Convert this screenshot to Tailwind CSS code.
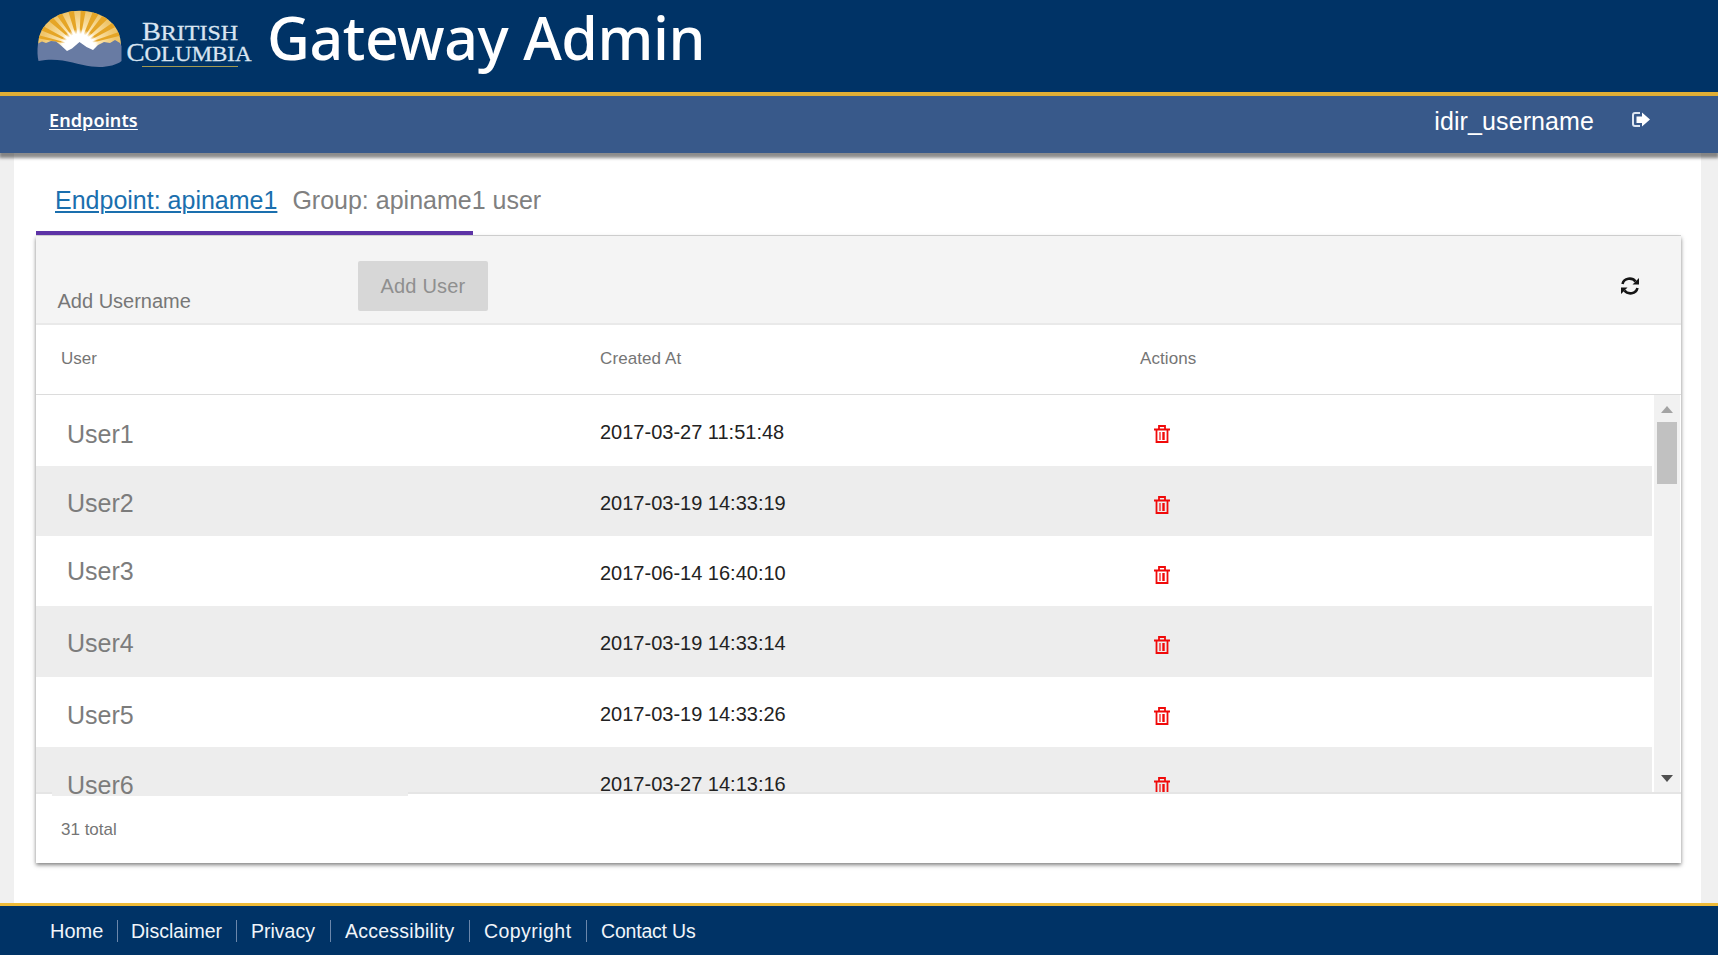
<!DOCTYPE html>
<html lang="en">
<head>
<meta charset="utf-8">
<title>Gateway Admin</title>
<script src="https://cdn.jsdelivr.net/npm/@tailwindcss/browser@4"></script>
</head>
<body class="w-[1718px] h-[955px] overflow-hidden flex flex-col bg-[#f0f0f0] font-['Liberation_Sans',Arial,sans-serif] text-[#757575]">
<svg class="hidden">
  <symbol id="trash" viewBox="0 0 16 18"><path fill="none" stroke="currentColor" stroke-width="1.800" d="M0 4.500h16M5 4V1h6v3M2.500 4.500v12.500h11V4.500"/><path fill="none" stroke="currentColor" stroke-width="1.200" d="M6 7v8"/><path fill="none" stroke="currentColor" stroke-width="2.400" d="M9.500 7v8"/></symbol>
</svg>
<header class="h-[96px] shrink-0 bg-[#003366] border-b-4 border-[#e0ae35] flex pl-[37px]">
  <svg class="w-[216px] h-[60px] mt-[10px] shrink-0" viewBox="37 10 216 60">
    <defs>
      <clipPath id="dome"><path d="M38 46C38 -1 121 -1 121 46V56H38Z"/></clipPath>
      <radialGradient id="glow" gradientUnits="userSpaceOnUse" cx="79" cy="48" r="38"><stop offset=".4" stop-color="#fff"/><stop offset=".55" stop-color="#fbe3ac"/><stop offset="1" stop-color="#efc56a"/></radialGradient>
      <radialGradient id="core" gradientUnits="userSpaceOnUse" cx="79" cy="49" r="20"><stop offset=".75" stop-color="#fff"/><stop offset="1" stop-color="#fff" stop-opacity="0"/></radialGradient>
    </defs>
    <g clip-path="url(#dome)">
      <rect x="37" y="10" width="85" height="46" fill="url(#glow)"/>
      <path fill="#e5a526" d="M79 46L31 37v-4ZM79 46L31 26l3-5ZM79 46L38 12l5-5ZM79 46L50 6l7-2ZM79 46L66 4h7ZM79 46L81 4h6ZM79 46L96 4l7 3ZM79 46L110 6l6 5ZM79 46L122 16l3 6ZM79 46L127 29v5Z"/>
      <circle cx="79" cy="49" r="20" fill="url(#core)"/>
    </g>
    <path fill="#687ba3" d="M38 43.500l4-2 4 1.500 5-2 5 .5 5 4 6 5.500 5-2.500 7.500-6.500 7 5 6.500 3 5-5 6-3 6 1 5-3 5 3 1.500 3v15c-6 5-18 7-30 5.500-16-2-31-10-53-5.500-1-4-1.500-10-.5-17.500Z"/>
    <g font-family="'Liberation Serif',serif" fill="#d9e5f1" stroke="#d9e5f1" stroke-width=".3">
      <text x="142" y="40" font-size="26" textLength="96" lengthAdjust="spacingAndGlyphs">B<tspan font-size="22">RITISH</tspan></text>
      <text x="126.500" y="61" font-size="26" textLength="125" lengthAdjust="spacingAndGlyphs">C<tspan font-size="22">OLUMBIA</tspan></text>
    </g>
    <path stroke="#a49a52" d="M142 66.500h96"/>
  </svg>
  <h1 class="ml-[14px] mt-[-3px] h-[80px] leading-[80px] text-[59px] tracking-[-0.45px] text-white whitespace-nowrap font-medium font-['Noto_Sans',sans-serif]">Gateway Admin</h1>
</header>
<nav class="relative z-10 h-[57px] shrink-0 bg-[#38598a] shadow-[0_4px_3px_1px_rgba(0,0,0,0.45)] flex justify-between pl-[49px] pr-[69px]">
  <a class="mt-[11px] h-[26px] leading-[26px] text-[18px] tracking-[0.1px] text-white underline underline-offset-2 font-semibold font-['Noto_Sans',sans-serif]">Endpoints</a>
  <div class="flex text-white">
    <span class="mt-[11px] h-[28px] leading-[28px] text-[25px] tracking-[0.1px]">idir_username</span>
    <svg class="w-[18px] h-[15px] ml-[37px] mt-[16px] translate-x-px" viewBox="0 0 18 15"><path fill="none" stroke="#dde6f2" stroke-width="2" d="M8 1H3Q1 1 1 3v9q0 2 2 2h5"/><path fill="#fff" d="M4.500 4.500H10V0.500l8 7-8 7V11H4.500Z"/></svg>
  </div>
</nav>
<main class="h-[750px] shrink-0 mx-[14px] mr-[17px] bg-white pl-[22px] pr-[20px]">
  <div class="h-[83px] flex flex-col justify-between border-b border-[#dadada]">
    <div class="flex pt-[33px] pl-[19px] text-[25px] leading-[28px]">
      <a class="text-[#1a6fae] underline decoration-2 underline-offset-2">Endpoint: apiname1</a>
      <span class="ml-[15px] text-[#808080]">Group: apiname1 user</span>
    </div>
    <div class="w-[437px] h-[4px] bg-[#5d33a6]"></div>
  </div>
  <section class="h-[627px] bg-white shadow-[0_2px_4px_0_rgba(0,0,0,0.5)] flex flex-col">
    <div class="h-[89px] shrink-0 bg-[#f4f4f4] border-b-2 border-[#e9e9e9] flex text-[20px] leading-[23px]">
      <span class="w-[300px] ml-[21.5px] mt-[54px] text-[#777]">Add Username</span>
      <button class="w-[130px] h-[50px] mt-[25px] pt-px pl-px rounded-xs bg-[#d7d7d7] text-[#8f8f8f] tracking-[0.2px]">Add User</button>
      <svg class="w-[18px] h-[18px] ml-auto mr-[42px] mt-[41px] text-[#151515]" viewBox="0 0 18 18"><path fill="none" stroke="currentColor" stroke-width="2.600" d="M1.500 7C3 1 11 0 14.500 4.500M16.500 11C15 17 7 18 3.500 13.500"/><path fill="currentColor" d="M18 1v6.500h-6.500ZM0 17v-6.500h6.500Z"/></svg>
    </div>
    <div class="h-[70px] shrink-0 border-b border-[#dcdcdc] grid grid-cols-[539px_539px_1fr] pl-[25px] pt-[24px] text-[17px] leading-[20px]">
      <span>User</span><span class="tracking-[0.1px]">Created At</span><span class="pl-px tracking-[0.1px]">Actions</span>
    </div>
    <div class="h-[399px] shrink-0 flex border-b-2 border-[#e5e5e5]">
      <div class="w-[1616px] h-[397px] shrink-0" id="rows"></div>
      <div class="ml-[2px] w-[26px] bg-[#f1f1f1] flex flex-col items-center">
        <svg class="w-[12px] h-[7px] mt-[11px]" viewBox="0 0 12 7"><path fill="#a3a3a3" d="M0 7L6 0l6 7Z"/></svg>
        <div class="w-[20px] h-[62px] mt-[9px] bg-[#c1c1c1]"></div>
        <svg class="w-[12px] h-[7px] mt-auto mb-[10px]" viewBox="0 0 12 7"><path fill="#505050" d="M0 0h12L6 7Z"/></svg>
      </div>
    </div>
    <div class="pl-[25px] pt-[26px] text-[17px] leading-[20px]">31 total</div>
  </section>
</main>
<footer class="h-[52px] shrink-0 bg-[#003366] border-t-3 border-[#efbb38] flex text-[19.5px] text-[#f0f5fa] leading-[22px] pl-[50px] pt-[14px] whitespace-nowrap">
  <a class="w-[68px] h-[22px] border-r border-[#6b87ab] text-[20px]">Home</a>
  <a class="w-[119px] h-[22px] border-r border-[#6b87ab] pl-[13px]">Disclaimer</a>
  <a class="w-[94px] h-[22px] border-r border-[#6b87ab] pl-[14px]">Privacy</a>
  <a class="w-[139px] h-[22px] border-r border-[#6b87ab] pl-[14px] tracking-[0.25px]">Accessibility</a>
  <a class="w-[117px] h-[22px] border-r border-[#6b87ab] pl-[14px] tracking-[0.45px]">Copyright</a>
  <a class="pl-[14px] tracking-[-0.2px]">Contact Us</a>
</footer>
<script>
const rows = [
  ['User1', '2017-03-27 11:51:48', 25, 71],
  ['User2', '2017-03-19 14:33:19', 23, 70],
  ['User3', '2017-06-14 16:40:10', 21, 70],
  ['User4', '2017-03-19 14:33:14', 23, 71],
  ['User5', '2017-03-19 14:33:26', 24, 70],
  ['User6', '2017-03-27 14:13:16', 24, 45],
];
document.getElementById('rows').innerHTML = rows.map(([user, date, top, height], i) => `
  <div class="grid grid-cols-[539px_554px_1fr] items-start pl-[25px] ${i % 2 ? 'bg-[#ededed]' : 'bg-white'}" style="height:${height}px">
    <div class="relative pl-[6px] text-[25px] leading-[28px] text-[#7c7c7c]" style="padding-top:${top}px">
      ${i === 5 ? '<div class="absolute left-[-9px] top-[40px] w-[356px] h-[9px] bg-[#ededed]"></div>' : ''}
      <span class="relative">${user}</span>
    </div>
    <span class="pt-[26px] text-[20px] leading-[23px] text-[#222]">${date}</span>
    <div class="pt-[30px] overflow-hidden text-[#f00a0a] ${i === 5 ? 'h-[45px]' : ''}"><svg class="w-[16px] h-[18px]"><use href="#trash"/></svg></div>
  </div>`).join('');
</script>
</body>
</html>
